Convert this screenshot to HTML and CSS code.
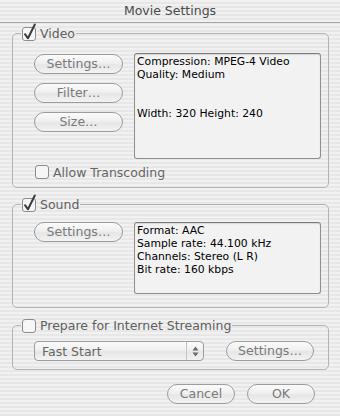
FILE: index.html
```html
<!DOCTYPE html>
<html>
<head>
<meta charset="utf-8">
<link rel="stylesheet" href="styles.css">
</head>
<body>
<div class="window">
  <div class="titlebar">Movie Settings</div>

  <fieldset class="group video">
    <legend>
      <span class="cb"><svg width="14" height="14" viewBox="0 0 14 14"><rect x="0.5" y="0.5" width="13" height="13" rx="2.5" class="cbbox"/><path d="M3 7.2 L6 11.3 L12.8 -2.5" class="tick"/></svg></span>
      <span class="legtext">Video</span>
    </legend>
    <div class="inner">
      <div class="row">
        <div class="btncol">
          <div class="btn">Settings…</div>
          <div class="btn">Filter…</div>
          <div class="btn">Size…</div>
        </div>
        <div class="info tall">Compression: MPEG-4 Video<br>Quality: Medium<br><br><br>Width: 320 Height: 240</div>
      </div>
      <div class="check sub">
        <span class="cb"><svg width="14" height="14" viewBox="0 0 14 14"><rect x="0.5" y="0.5" width="13" height="13" rx="2.5" class="cbbox"/></svg></span>
        <span>Allow Transcoding</span>
      </div>
    </div>
  </fieldset>

  <fieldset class="group sound">
    <legend>
      <span class="cb"><svg width="14" height="14" viewBox="0 0 14 14"><rect x="0.5" y="0.5" width="13" height="13" rx="2.5" class="cbbox"/><path d="M3 7.2 L6 11.3 L12.8 -2.5" class="tick"/></svg></span>
      <span class="legtext">Sound</span>
    </legend>
    <div class="inner">
      <div class="row">
        <div class="btncol">
          <div class="btn">Settings…</div>
        </div>
        <div class="info short">Format: AAC<br>Sample rate: 44.100 kHz<br>Channels: Stereo (L R)<br>Bit rate: 160 kbps</div>
      </div>
    </div>
  </fieldset>

  <fieldset class="group stream">
    <legend>
      <span class="cb"><svg width="14" height="14" viewBox="0 0 14 14"><rect x="0.5" y="0.5" width="13" height="13" rx="2.5" class="cbbox"/></svg></span>
      <span class="legtext">Prepare for Internet Streaming</span>
    </legend>
    <div class="inner">
      <div class="row streamrow">
        <div class="popup">
          <span class="popuptext">Fast Start</span>
          <span class="arrows"><svg width="7" height="11" viewBox="0 0 7 11"><path d="M3.5 0.5 L6.5 4.5 L0.5 4.5 Z M0.5 6.5 L6.5 6.5 L3.5 10.5 Z" fill="#6a6a6a"/></svg></span>
        </div>
        <div class="btn wide">Settings…</div>
      </div>
    </div>
  </fieldset>

  <div class="actions">
    <div class="btn act">Cancel</div>
    <div class="btn act">OK</div>
  </div>
</div>
</body>
</html>
```
FILE: styles.css
```css
html, body {
  margin: 0;
  padding: 0;
}
body {
  width: 340px;
  height: 416px;
  overflow: hidden;
  font-family: "DejaVu Sans", "Liberation Sans", sans-serif;
  background: repeating-linear-gradient(to bottom, #f1f1f1 0, #f1f1f1 2px, #e7e7e7 2px, #e7e7e7 4px);
}
.window {
  width: 340px;
  height: 416px;
  display: flex;
  flex-direction: column;
}
.titlebar {
  height: 22px;
  border-bottom: 1px solid #a5a5a5;
  text-align: center;
  font-size: 12.5px;
  line-height: 21px;
  color: #4a4a4a;
}
.group {
  margin: 3px 11px 0 12px;
  padding: 0;
  border: 1px solid #b3b3b3;
  border-radius: 5px;
  min-width: 0;
}
.group legend {
  margin-left: 8px;
  padding: 0 1px;
  height: 15px;
  display: flex;
  align-items: center;
  gap: 4px;
  font-size: 12.5px;
  color: #606060;
}
.cb {
  width: 14px;
  height: 14px;
  display: block;
}
.cb svg {
  display: block;
  overflow: visible;
}
.cbbox {
  fill: #f6f6f6;
  stroke: #8c8c8c;
  stroke-width: 1;
}
.tick {
  fill: none;
  stroke: #3c3c3c;
  stroke-width: 2;
  stroke-linecap: round;
  stroke-linejoin: round;
}
.inner {
  padding: 0 7px 8px 21px;
}
.row {
  display: flex;
  gap: 11px;
  margin-top: 12px;
}
.btncol {
  display: flex;
  flex-direction: column;
  gap: 9px;
  padding-top: 1px;
  width: 89px;
}
.btn {
  height: 20px;
  box-sizing: border-box;
  border: 1px solid #9d9d9d;
  border-radius: 10px;
  background: linear-gradient(to bottom, #fbfbfb 0%, #f0f0f0 45%, #e6e6e6 55%, #f3f3f3 100%);
  color: #7a7a7a;
  font-size: 12.5px;
  line-height: 18px;
  text-align: center;
  white-space: nowrap;
}
.info {
  width: 187px;
  box-sizing: border-box;
  border: 1px solid #8f8f8f;
  border-top-color: #7a7a7a;
  border-radius: 3px;
  background: #f2f2f2;
  box-shadow: inset 0 1px 1px rgba(0, 0, 0, 0.12);
  font-size: 10.8px;
  line-height: 13px;
  color: #000;
  padding: 1px 2px;
  white-space: nowrap;
}
.info.tall {
  height: 106px;
}
.info.short {
  height: 72px;
}
.check {
  display: flex;
  align-items: center;
  gap: 4px;
  font-size: 12.5px;
  color: #666;
}
.check.sub {
  margin-top: 6px;
  margin-left: 1px;
  height: 14px;
}
.sound {
  margin-top: 9px;
}
.sound .inner {
  padding-bottom: 13px;
}
.sound .row {
  margin-top: 10px;
}
.sound .btncol {
  padding-top: 0;
}
.stream {
  margin-top: 10px;
}
.stream .inner {
  padding-bottom: 8px;
}
.streamrow {
  margin-top: 8px;
  gap: 22px;
}
.popup {
  width: 170px;
  height: 20px;
  box-sizing: border-box;
  border: 1px solid #9d9d9d;
  border-radius: 4px;
  background: linear-gradient(to bottom, #fbfbfb 0%, #f0f0f0 45%, #e6e6e6 55%, #f3f3f3 100%);
  display: flex;
  align-items: center;
}
.popuptext {
  flex: 1;
  padding-left: 7px;
  font-size: 12.5px;
  color: #666;
}
.arrows {
  width: 16px;
  height: 18px;
  border-left: 1px solid #c4c4c4;
  display: flex;
  align-items: center;
  justify-content: center;
}
.arrows svg {
  display: block;
}
.btn.wide {
  width: 88px;
}
.actions {
  display: flex;
  justify-content: flex-end;
  gap: 12px;
  padding-right: 25px;
  margin-top: 14px;
}
.btn.act {
  width: 68px;
}
```
